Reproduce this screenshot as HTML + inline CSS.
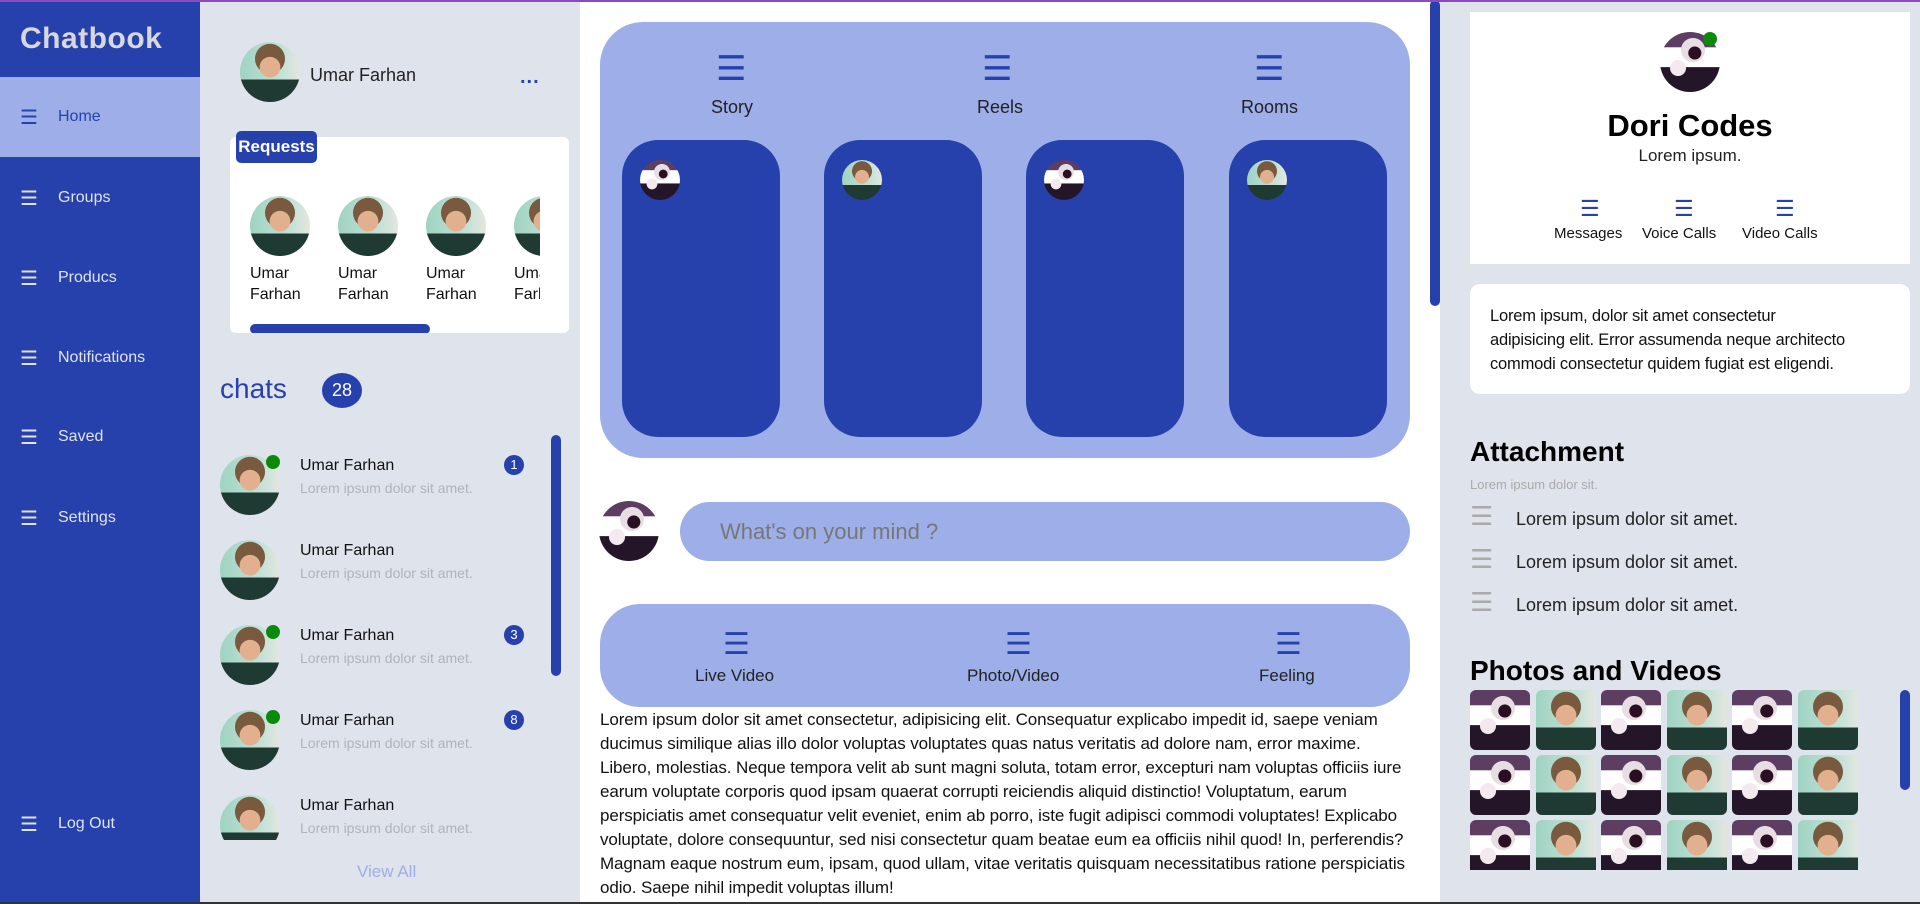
<!DOCTYPE html>
<html><head><meta charset="utf-8"><style>
*{box-sizing:border-box;margin:0;padding:0}
body{width:1920px;height:904px;overflow:hidden;font-family:"Liberation Sans",sans-serif;background:#fff;position:relative}
.a{position:absolute}
.man{border-radius:50%;background:radial-gradient(circle at 50% 42%,#e2b08e 0 22%,transparent 23%),linear-gradient(180deg,transparent 0 62%,#1f3a33 63%),radial-gradient(circle at 50% 28%,#7a5a3e 0 28%,transparent 29%),linear-gradient(90deg,#9fd3c2,#c3e2d8 70%,#e4e6e0);}
.dori{border-radius:50%;background:radial-gradient(circle at 58% 35%,#2a0f22 0 12%,transparent 13%),radial-gradient(circle at 55% 30%,#e9dde4 0 22%,transparent 23%),radial-gradient(circle at 30% 60%,#f4e9ef 0 14%,transparent 15%),linear-gradient(180deg,#5e3d63 0 25%,#fff 26% 58%,#241628 59%);}
.sq{border-radius:6px}
.ham{color:#2741ac;font-size:34px;line-height:1}
.side div.it{position:absolute;left:0;width:200px;height:80px;color:#dfe3ec;font-size:16px;display:flex;align-items:center}
.side .it span{display:inline-block;width:58px;padding-left:20px;font-size:20px}
.dot{position:absolute;width:14px;height:14px;border-radius:50%;background:#0a8a0a}
.badge{position:absolute;width:20px;height:20px;border-radius:50%;background:#2741ac;color:#fff;font-size:13px;text-align:center;line-height:20px}
</style></head><body>
<div class="a" style="left:0;top:0;width:1920px;height:2px;background:#8a4bbf;z-index:5"></div>
<div class="a side" style="left:0;top:0;width:200px;height:904px;background:#2741ac">
<div class="a" style="left:20px;top:22px;font-size:30px;font-weight:bold;color:#d8d8dc;letter-spacing:0.5px">Chatbook</div>
<div class="it" style="top:77px;background:#9daee8;color:#2741ac"><span>☰</span>Home</div>
<div class="it" style="top:158px"><span>☰</span>Groups</div>
<div class="it" style="top:238px"><span>☰</span>Producs</div>
<div class="it" style="top:318px"><span>☰</span>Notifications</div>
<div class="it" style="top:397px"><span>☰</span>Saved</div>
<div class="it" style="top:478px"><span>☰</span>Settings</div>
<div class="it" style="top:784px"><span>☰</span>Log Out</div>
</div>
<div class="a" style="left:200px;top:0;width:380px;height:904px;background:#dfe3ec">
<div class="a man" style="left:40px;top:42px;width:60px;height:60px"></div>
<div class="a" style="left:110px;top:65px;font-size:18px;color:#222">Umar Farhan</div>
<div class="a" style="left:320px;top:66px;font-size:20px;color:#2741ac;font-weight:bold;letter-spacing:1px">...</div>
<div class="a" style="left:30px;top:137px;width:339px;height:196px;background:#fff;border-radius:6px;overflow:hidden">
<div class="a man" style="left:20px;top:59px;width:60px;height:60px"></div>
<div class="a man" style="left:108px;top:59px;width:60px;height:60px"></div>
<div class="a man" style="left:196px;top:59px;width:60px;height:60px"></div>
<div class="a man" style="left:284px;top:59px;width:60px;height:60px"></div>
<div class="a" style="left:20px;top:126px;font-size:16px;line-height:21px;color:#111">Umar<br>Farhan</div>
<div class="a" style="left:108px;top:126px;font-size:16px;line-height:21px;color:#111">Umar<br>Farhan</div>
<div class="a" style="left:196px;top:126px;font-size:16px;line-height:21px;color:#111">Umar<br>Farhan</div>
<div class="a" style="left:284px;top:126px;width:26px;overflow:hidden;font-size:16px;line-height:21px;color:#111">Umar<br>Farhan</div>
<div class="a" style="left:310px;top:0;width:29px;height:196px;background:#fff"></div>
<div class="a" style="left:20px;top:187px;width:180px;height:10px;border-radius:5px;background:#2741ac"></div>
</div>
<div class="a" style="left:36px;top:131px;width:81px;height:32px;background:#2741ac;border-radius:5px;color:#fff;font-size:17px;font-weight:bold;text-align:center;line-height:32px">Requests</div>
<div class="a" style="left:20px;top:373px;font-size:28px;color:#2741ac">chats</div>
<div class="a" style="left:122px;top:373px;width:40px;height:35px;border-radius:50%;background:#2741ac;color:#fff;text-align:center;line-height:35px;font-size:18px">28</div>
<div class="a" style="left:0;top:440px;width:380px;height:400px;overflow:hidden">
 <div class="a man" style="left:20px;top:15px;width:60px;height:60px"></div><div class="dot" style="left:66px;top:15px"></div>
 <div class="a" style="left:100px;top:17px;font-size:16px;color:#111">Umar Farhan</div><div class="a" style="left:100px;top:40px;font-size:14px;color:#b0b3bd">Lorem ipsum dolor sit amet.</div><div class="badge" style="left:304px;top:15px">1</div>
 <div class="a man" style="left:20px;top:100px;width:60px;height:60px"></div>
 <div class="a" style="left:100px;top:102px;font-size:16px;color:#111">Umar Farhan</div><div class="a" style="left:100px;top:125px;font-size:14px;color:#b0b3bd">Lorem ipsum dolor sit amet.</div>
 <div class="a man" style="left:20px;top:185px;width:60px;height:60px"></div><div class="dot" style="left:66px;top:185px"></div>
 <div class="a" style="left:100px;top:187px;font-size:16px;color:#111">Umar Farhan</div><div class="a" style="left:100px;top:210px;font-size:14px;color:#b0b3bd">Lorem ipsum dolor sit amet.</div><div class="badge" style="left:304px;top:185px">3</div>
 <div class="a man" style="left:20px;top:270px;width:60px;height:60px"></div><div class="dot" style="left:66px;top:270px"></div>
 <div class="a" style="left:100px;top:272px;font-size:16px;color:#111">Umar Farhan</div><div class="a" style="left:100px;top:295px;font-size:14px;color:#b0b3bd">Lorem ipsum dolor sit amet.</div><div class="badge" style="left:304px;top:270px">8</div>
 <div class="a man" style="left:20px;top:355px;width:60px;height:60px"></div>
 <div class="a" style="left:100px;top:357px;font-size:16px;color:#111">Umar Farhan</div><div class="a" style="left:100px;top:380px;font-size:14px;color:#b0b3bd">Lorem ipsum dolor sit amet.</div>
</div>
<div class="a" style="left:351px;top:435px;width:10px;height:241px;border-radius:5px;background:#2741ac"></div>
<div class="a" style="left:157px;top:862px;font-size:17px;color:#9daee8">View All</div>
</div>
<div class="a" style="left:600px;top:22px;width:810px;height:436px;background:#9daee8;border-radius:43px">
 <div class="a ham" style="left:116px;top:30px">☰</div><div class="a" style="left:111px;top:75px;font-size:18px;color:#222">Story</div>
 <div class="a ham" style="left:382px;top:30px">☰</div><div class="a" style="left:377px;top:75px;font-size:18px;color:#222">Reels</div>
 <div class="a ham" style="left:654px;top:30px">☰</div><div class="a" style="left:641px;top:75px;font-size:18px;color:#222">Rooms</div>
 <div class="a" style="left:22px;top:118px;width:158px;height:297px;background:#2741ac;border-radius:36px"><div class="a dori" style="left:18px;top:20px;width:40px;height:40px"></div></div>
 <div class="a" style="left:224px;top:118px;width:158px;height:297px;background:#2741ac;border-radius:36px"><div class="a man" style="left:18px;top:20px;width:40px;height:40px"></div></div>
 <div class="a" style="left:426px;top:118px;width:158px;height:297px;background:#2741ac;border-radius:36px"><div class="a dori" style="left:18px;top:20px;width:40px;height:40px"></div></div>
 <div class="a" style="left:629px;top:118px;width:158px;height:297px;background:#2741ac;border-radius:36px"><div class="a man" style="left:18px;top:20px;width:40px;height:40px"></div></div>
</div>
<div class="a" style="left:1430px;top:0;width:10px;height:306px;border-radius:5px;background:#2741ac"></div>
<div class="a dori" style="left:599px;top:501px;width:60px;height:60px"></div>
<div class="a" style="left:680px;top:502px;width:730px;height:59px;border-radius:30px;background:#9daee8;color:#777;font-size:22px;line-height:59px;padding-left:40px">What's on your mind ?</div>
<div class="a" style="left:600px;top:604px;width:810px;height:103px;background:#9daee8;border-radius:40px">
 <div class="a ham" style="left:123px;top:26px;font-size:30px">☰</div><div class="a" style="left:95px;top:62px;font-size:17px;color:#222">Live Video</div>
 <div class="a ham" style="left:405px;top:26px;font-size:30px">☰</div><div class="a" style="left:367px;top:62px;font-size:17px;color:#222">Photo/Video</div>
 <div class="a ham" style="left:675px;top:26px;font-size:30px">☰</div><div class="a" style="left:659px;top:62px;font-size:17px;color:#222">Feeling</div>
</div>
<div class="a" style="left:600px;top:708px;width:815px;font-size:17px;line-height:24px;color:#111;letter-spacing:-0.1px">Lorem ipsum dolor sit amet consectetur, adipisicing elit. Consequatur explicabo impedit id, saepe veniam ducimus similique alias illo dolor voluptas voluptates quas natus veritatis ad dolore nam, error maxime. Libero, molestias. Neque tempora velit ab sunt magni soluta, totam error, excepturi nam voluptas officiis iure earum voluptate corporis quod ipsam quaerat corrupti reiciendis aliquid distinctio! Voluptatum, earum perspiciatis amet consequatur velit eveniet, enim ab porro, iste fugit adipisci commodi voluptates! Explicabo voluptate, dolore consequuntur, sed nisi consectetur quam beatae eum ea officiis nihil quod! In, perferendis? Magnam eaque nostrum eum, ipsam, quod ullam, vitae veritatis quisquam necessitatibus ratione perspiciatis odio. Saepe nihil impedit voluptas illum!</div>
<div class="a" style="left:1440px;top:0;width:480px;height:904px;background:#dfe3ec">
<div class="a" style="left:30px;top:12px;width:440px;height:252px;background:#fff">
 <div class="a dori" style="left:190px;top:20px;width:60px;height:60px"></div><div class="dot" style="left:233px;top:20px"></div>
 <div class="a" style="left:0;top:96px;width:440px;text-align:center;font-size:31px;font-weight:bold;color:#000">Dori Codes</div>
 <div class="a" style="left:0;top:134px;width:440px;text-align:center;font-size:17px;color:#222">Lorem ipsum.</div>
 <div class="a ham" style="left:110px;top:186px;font-size:22px">☰</div><div class="a" style="left:84px;top:213px;font-size:15px;color:#111">Messages</div>
 <div class="a ham" style="left:204px;top:186px;font-size:22px">☰</div><div class="a" style="left:172px;top:213px;font-size:15px;color:#111">Voice Calls</div>
 <div class="a ham" style="left:305px;top:186px;font-size:22px">☰</div><div class="a" style="left:272px;top:213px;font-size:15px;color:#111">Video Calls</div>
</div>
<div class="a" style="left:30px;top:284px;width:440px;height:110px;background:#fff;border-radius:10px;padding:20px 20px;font-size:16.5px;line-height:24px;color:#111;letter-spacing:-0.2px;white-space:nowrap">Lorem ipsum, dolor sit amet consectetur<br>adipisicing elit. Error assumenda neque architecto<br>commodi consectetur quidem fugiat est eligendi.</div>
<div class="a" style="left:30px;top:436px;font-size:28px;font-weight:bold;color:#000">Attachment</div>
<div class="a" style="left:30px;top:477px;font-size:13px;color:#aaa">Lorem ipsum dolor sit.</div>
<div class="a" style="left:30px;top:496px;font-size:18px;color:#222;line-height:40px">
<div><span style="color:#aaa;font-size:26px;display:inline-block;width:46px">☰</span>Lorem ipsum dolor sit amet.</div>
<div><span style="color:#aaa;font-size:26px;display:inline-block;width:46px">☰</span>Lorem ipsum dolor sit amet.</div>
<div><span style="color:#aaa;font-size:26px;display:inline-block;width:46px">☰</span>Lorem ipsum dolor sit amet.</div>
</div>
<div class="a" style="left:30px;top:655px;font-size:28px;font-weight:bold;color:#000">Photos and Videos</div>
<div class="a" style="left:30px;top:690px;width:400px;height:180px;overflow:hidden">
<div class="a dori sq" style="left:0;top:0;width:60px;height:60px"></div><div class="a man sq" style="left:66px;top:0;width:60px;height:60px"></div><div class="a dori sq" style="left:131px;top:0;width:60px;height:60px"></div><div class="a man sq" style="left:197px;top:0;width:60px;height:60px"></div><div class="a dori sq" style="left:262px;top:0;width:60px;height:60px"></div><div class="a man sq" style="left:328px;top:0;width:60px;height:60px"></div>
<div class="a dori sq" style="left:0;top:65px;width:60px;height:60px"></div><div class="a man sq" style="left:66px;top:65px;width:60px;height:60px"></div><div class="a dori sq" style="left:131px;top:65px;width:60px;height:60px"></div><div class="a man sq" style="left:197px;top:65px;width:60px;height:60px"></div><div class="a dori sq" style="left:262px;top:65px;width:60px;height:60px"></div><div class="a man sq" style="left:328px;top:65px;width:60px;height:60px"></div>
<div class="a dori sq" style="left:0;top:130px;width:60px;height:60px"></div><div class="a man sq" style="left:66px;top:130px;width:60px;height:60px"></div><div class="a dori sq" style="left:131px;top:130px;width:60px;height:60px"></div><div class="a man sq" style="left:197px;top:130px;width:60px;height:60px"></div><div class="a dori sq" style="left:262px;top:130px;width:60px;height:60px"></div><div class="a man sq" style="left:328px;top:130px;width:60px;height:60px"></div>
</div>
<div class="a" style="left:460px;top:690px;width:10px;height:100px;border-radius:5px;background:#2741ac"></div>
</div>
<div class="a" style="left:0;top:902px;width:1920px;height:2px;background:#333"></div>
</body></html>
